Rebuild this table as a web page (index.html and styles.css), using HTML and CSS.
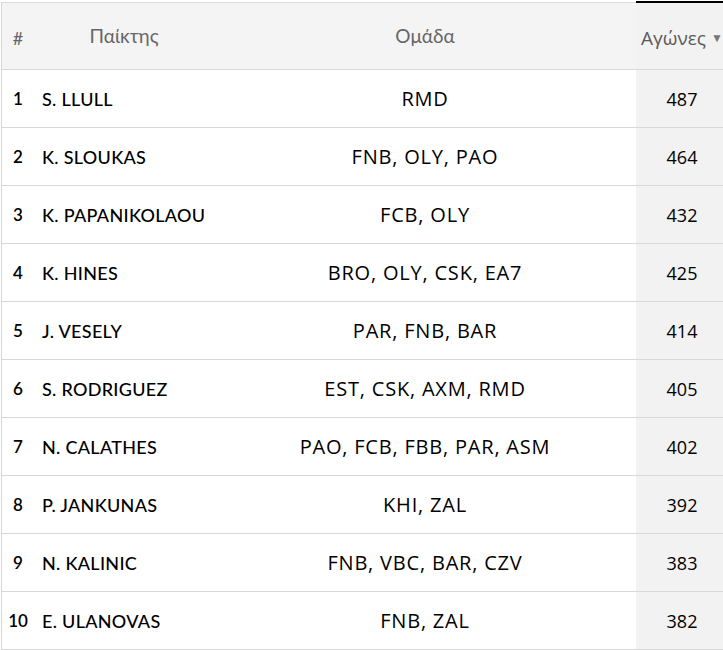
FILE: index.html
```html
<!DOCTYPE html>
<html lang="el">
<head>
<meta charset="utf-8">
<link rel="stylesheet" href="styles.css">
</head>
<body>
<div class="wrap">
<table class="stats">
  <thead>
    <tr>
      <th class="c-rank">#</th>
      <th class="c-name">Παίκτης</th>
      <th class="c-team">Ομάδα</th>
      <th class="c-games sorted">Αγώνες <span class="arrow">▼</span></th>
    </tr>
  </thead>
  <tbody>
    <tr><td class="c-rank">1</td><td class="c-name">S. LLULL</td><td class="c-team">RMD</td><td class="c-games">487</td></tr>
    <tr><td class="c-rank">2</td><td class="c-name">K. SLOUKAS</td><td class="c-team">FNB, OLY, PAO</td><td class="c-games">464</td></tr>
    <tr><td class="c-rank">3</td><td class="c-name">K. PAPANIKOLAOU</td><td class="c-team">FCB, OLY</td><td class="c-games">432</td></tr>
    <tr><td class="c-rank">4</td><td class="c-name">K. HINES</td><td class="c-team">BRO, OLY, CSK, EA7</td><td class="c-games">425</td></tr>
    <tr><td class="c-rank">5</td><td class="c-name">J. VESELY</td><td class="c-team">PAR, FNB, BAR</td><td class="c-games">414</td></tr>
    <tr><td class="c-rank">6</td><td class="c-name">S. RODRIGUEZ</td><td class="c-team">EST, CSK, AXM, RMD</td><td class="c-games">405</td></tr>
    <tr><td class="c-rank">7</td><td class="c-name">N. CALATHES</td><td class="c-team">PAO, FCB, FBB, PAR, ASM</td><td class="c-games">402</td></tr>
    <tr><td class="c-rank">8</td><td class="c-name">P. JANKUNAS</td><td class="c-team">KHI, ZAL</td><td class="c-games">392</td></tr>
    <tr><td class="c-rank">9</td><td class="c-name">N. KALINIC</td><td class="c-team">FNB, VBC, BAR, CZV</td><td class="c-games">383</td></tr>
    <tr><td class="c-rank">10</td><td class="c-name">E. ULANOVAS</td><td class="c-team">FNB, ZAL</td><td class="c-games">382</td></tr>
  </tbody>
</table>
</div>
</body>
</html>
```
FILE: styles.css
```css
html, body {
  margin: 0;
  padding: 0;
  background: #ffffff;
}
.wrap {
  padding: 1px 0 0 1px;
  width: 740px;
}
.stats {
  border-collapse: collapse;
  table-layout: fixed;
  width: 727px;
  font-family: Lato, "Noto Sans", sans-serif;
  color: #000000;
}
.stats th, .stats td {
  padding: 0;
  border-bottom: 1px solid #d8d8d8;
}
.stats thead tr {
  background: #f4f4f4;
  border-top: 1px solid #dcdcdc;
}
.stats th {
  height: 62px;
  font-weight: 400;
  font-size: 19px;
  color: #666666;
  vertical-align: middle;
}
.stats thead th:first-child,
.stats tbody td:first-child {
  border-left: 1px solid #d8d8d8;
}
.stats td {
  height: 57px;
  vertical-align: middle;
}
.c-rank {
  width: 32px;
  text-align: center;
  font-size: 17px;
  font-weight: 600;
}
th.c-rank { font-weight: 400; font-size: 18px; padding-top: 4px; }
.c-name {
  width: 180px;
  text-align: left;
  padding-left: 8px !important;
  font-size: 18px;
  font-weight: 500;
  letter-spacing: 0.3px;
}
th.c-name { text-align: center; padding-left: 0 !important; padding-right: 0; letter-spacing: 0; font-weight: 400; }
.c-team {
  width: 422px;
  text-align: center;
  font-family: "Open Sans", sans-serif;
  font-size: 20px;
  font-weight: 500;
  letter-spacing: 0.8px;
}
th.c-team { font-family: Lato, sans-serif; font-size: 19px; font-weight: 400; letter-spacing: 0; }
.c-games {
  width: 91px;
  text-align: center;
  background: #f2f2f2;
  font-family: "Open Sans", sans-serif;
  font-size: 18px;
  font-weight: 500;
  padding-right: 4px !important;
}
th.c-games {
  border-top: 2px solid #000;
  font-family: "Open Sans", sans-serif;
  font-size: 19px;
  font-weight: 400;
  color: #5a5a5a;
  text-align: left;
  padding-left: 5px !important;
  padding-right: 0 !important;
  padding-top: 4px;
  white-space: nowrap;
}
.arrow {
  font-size: 12px;
  color: #777;
  vertical-align: 3px;
}
```
